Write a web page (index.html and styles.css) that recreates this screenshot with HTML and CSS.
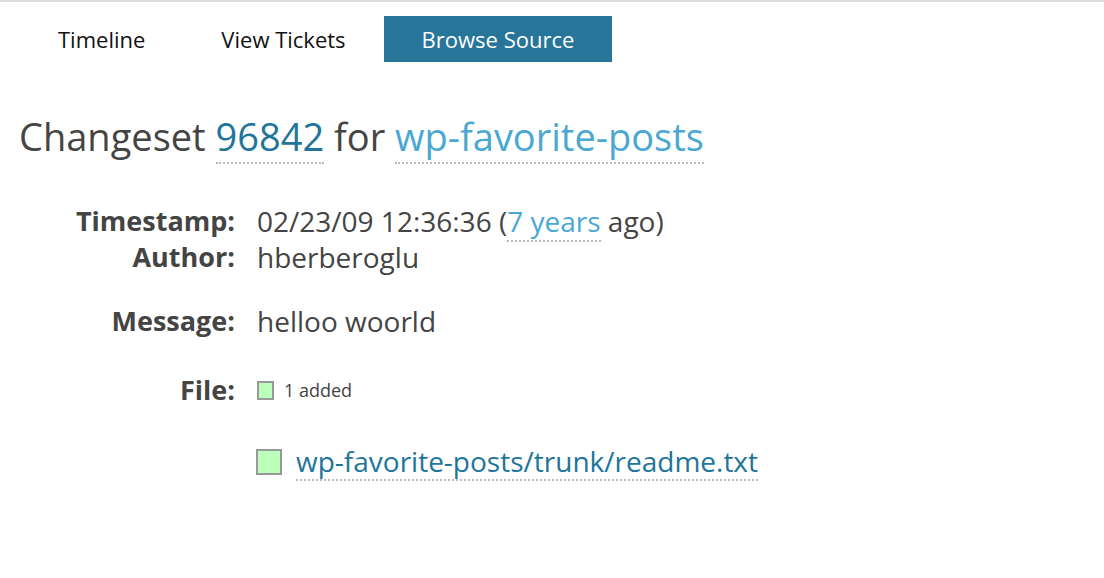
FILE: index.html
```html
<!DOCTYPE html>
<html>
<head>
<meta charset="utf-8">
<link rel="stylesheet" href="styles.css">
</head>
<body>
<div class="topline"></div>
<nav class="nav">
  <a class="nav-item">Timeline</a>
  <a class="nav-item">View Tickets</a>
  <a class="nav-item active">Browse Source</a>
</nav>
<h1 class="title">Changeset <a class="link dark">96842</a> for <a class="link light">wp-favorite-posts</a></h1>
<dl class="props">
  <dt>Timestamp:</dt>
  <dd>02/23/09 12:36:36 (<a class="link light">7 years</a> ago)</dd>
  <dt>Author:</dt>
  <dd>hberberoglu</dd>
  <dt class="gap">Message:</dt>
  <dd class="gap">helloo woorld</dd>
  <dt class="gap2">File:</dt>
  <dd class="gap2 files"><span class="sq small"></span><span class="added">1 added</span></dd>
</dl>
<div class="filelist">
  <span class="sq big"></span><a class="link dark">wp-favorite-posts/trunk/readme.txt</a>
</div>
</body>
</html>
```
FILE: styles.css
```css
html, body {
  margin: 0;
  padding: 0;
  background: #fff;
  font-family: "Open Sans", sans-serif;
  color: #444;
}
.topline {
  height: 2px;
  background: #ddd;
}
.nav {
  display: flex;
  padding: 14px 0 0 20px;
}
.nav-item {
  display: block;
  height: 46px;
  line-height: 46px;
  padding: 0 38px;
  font-size: 22px;
  color: #111;
}
.nav-item.active {
  background: #277599;
  color: #fff;
}
.title {
  margin: 51px 0 0 19px;
  font-size: 38px;
  font-weight: 400;
  line-height: 46px;
  color: #444;
}
.link {
  text-decoration: none;
  border-bottom: 2px dotted #bbb;
}
.link.dark { color: #21759b; }
.link.light { color: #4aa8d2; }
.props {
  display: grid;
  grid-template-columns: 216px auto;
  column-gap: 22px;
  margin: 44px 0 0 19px;
  font-size: 28px;
  line-height: 36px;
}
.props dt {
  text-align: right;
  font-weight: 700;
  font-size: 27px;
}
.props dd {
  margin: 0;
}
.props .gap { margin-top: 28px; }
.props .gap2 { margin-top: 33px; }
.files {
  display: flex;
  align-items: center;
}
.sq {
  display: inline-block;
  box-sizing: border-box;
  background: #bfb;
  border: 2px solid #999;
}
.sq.small {
  width: 17px;
  height: 19px;
  margin-right: 10px;
}
.added {
  font-size: 18px;
}
.filelist {
  display: flex;
  align-items: center;
  margin: 35px 0 0 256px;
  font-size: 28px;
  line-height: 36px;
}
.sq.big {
  width: 26px;
  height: 26px;
  margin-right: 14px;
}
```
